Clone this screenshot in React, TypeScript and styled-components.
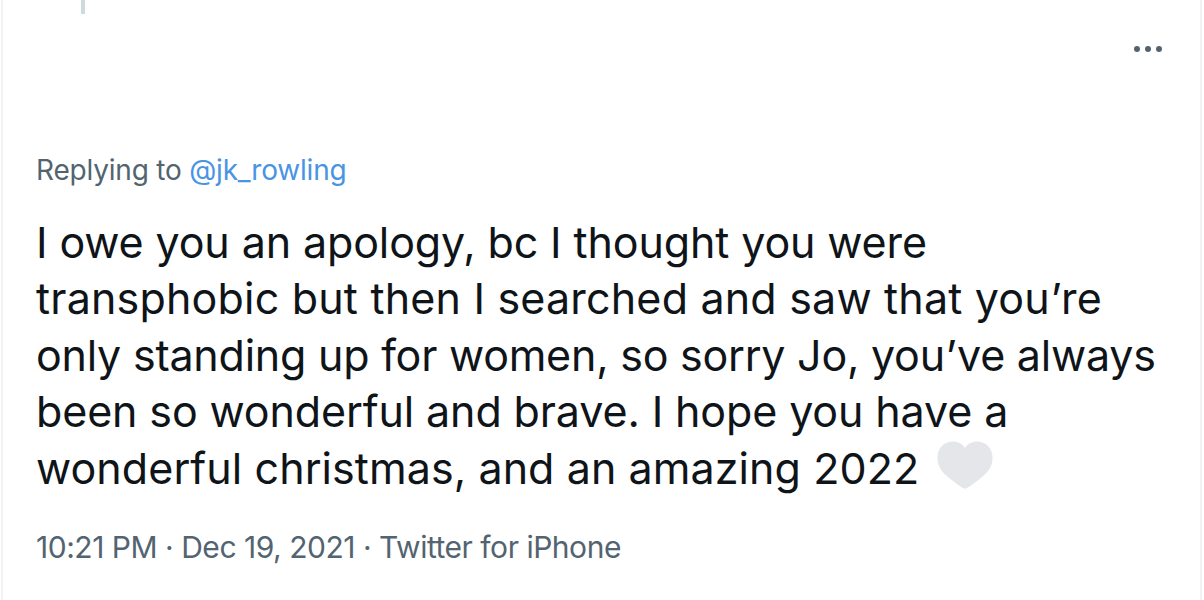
import React from "react";
import styled, { createGlobalStyle } from "styled-components";

const GlobalStyle = createGlobalStyle`
  html, body {
    margin: 0;
    padding: 0;
    background: #ffffff;
  }
`;

export default function App() {
  return (
    <>
      <GlobalStyle />
      <Card>
        <TopRow>
          <ThreadColumn>
            <ThreadLine />
          </ThreadColumn>
          <MoreButton aria-label="More">
            <Dot />
            <Dot />
            <Dot />
          </MoreButton>
        </TopRow>
        <ReplyingTo>
          Replying to <Mention>@jk_rowling</Mention>
        </ReplyingTo>
        <TweetBody>
          <Line>I owe you an apology, bc I thought you were</Line>
          <Line $tracking={0.19}>transphobic but then I searched and saw that you’re</Line>
          <Line $tracking={-0.23}>only standing up for women, so sorry Jo, you’ve always</Line>
          <Line>been so wonderful and brave. I hope you have a</Line>
          <Line $tracking={0.08}>
            wonderful christmas, and an amazing 2022
            <Heart viewBox="0 0 60 54" preserveAspectRatio="none" aria-label="white heart">
              <path d="M30 53.5C27.5 53.5 24 50.5 14 42.5C5 35 0.5 28.5 0.5 18.5C0.5 8 8 0.5 17 0.5C22.5 0.5 27 3 30 8C33 3 37.5 0.5 43 0.5C52 0.5 59.5 8 59.5 18.5C59.5 28.5 55 35 46 42.5C36 50.5 32.5 53.5 30 53.5Z" />
            </Heart>
          </Line>
        </TweetBody>
        <Meta>10:21 PM · Dec 19, 2021 · Twitter for iPhone</Meta>
      </Card>
    </>
  );
}

const Card = styled.div`
  box-sizing: border-box;
  width: 1201px;
  height: 600px;
  margin-left: 1px;
  overflow: hidden;
  padding: 0 0 0 33px;
  background: #fff;
  border-left: 2px solid #eff3f4;
  border-right: 2px solid #eff3f4;
  font-family: Inter, "Liberation Sans", sans-serif;
`;

const TopRow = styled.div`
  display: flex;
  justify-content: space-between;
  height: 150px;
`;

const ThreadColumn = styled.div`
  padding-left: 45px;
`;

const ThreadLine = styled.div`
  width: 4px;
  height: 14px;
  background: #cfd9de;
`;

const MoreButton = styled.div`
  display: flex;
  gap: 5px;
  height: 6px;
  margin: 46px 38px 0 0;
`;

const Dot = styled.span`
  width: 6px;
  height: 6px;
  border-radius: 50%;
  background: #536471;
`;

const ReplyingTo = styled.div`
  font-size: 28px;
  line-height: 40px;
  letter-spacing: -0.2px;
  color: #536471;
`;

const Mention = styled.span`
  color: #4a94e4;
`;

const TweetBody = styled.div`
  margin-top: 24px;
  font-size: 43px;
  line-height: 56.4px;
  color: #0f1419;
`;

const Line = styled.div<{ $tracking?: number }>`
  display: flex;
  align-items: center;
  height: 56.4px;
  white-space: pre;
  letter-spacing: ${(p) => p.$tracking ?? -0.12}px;
`;

const Heart = styled.svg`
  flex: none;
  width: 56px;
  height: 48px;
  margin: 0 0 6px 18px;
  fill: #e4e6e9;
`;

const Meta = styled.div`
  margin-top: 31px;
  font-size: 30px;
  line-height: 40px;
  letter-spacing: -0.48px;
  color: #536471;
`;
